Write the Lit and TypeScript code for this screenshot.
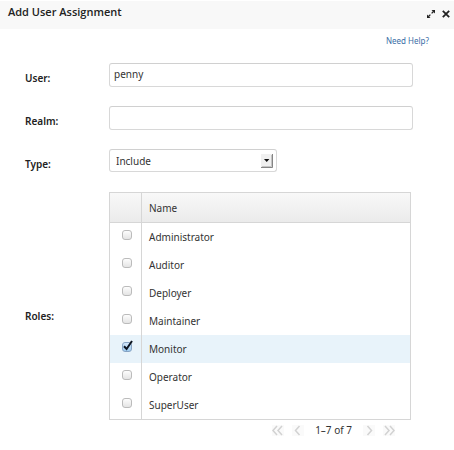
import { LitElement, html, css, svg } from "lit";
import { customElement, state } from "lit/decorators.js";

interface Role {
  name: string;
  granted: boolean;
}

const chevron = (double: boolean) => svg`
  <path d="${double ? "M5 1 L1 5.5 L5 10 M10 1 L6 5.5 L10 10" : "M7.5 1 L3.5 5.5 L7.5 10"}"
    fill="none" stroke="#d2d2d2" stroke-width="1.5"></path>`;

@customElement("app-root")
export class AppRoot extends LitElement {
  @state() private roles: Role[] = [
    { name: "Administrator", granted: false },
    { name: "Auditor", granted: false },
    { name: "Deployer", granted: false },
    { name: "Maintainer", granted: false },
    { name: "Monitor", granted: true },
    { name: "Operator", granted: false },
    { name: "SuperUser", granted: false },
  ];

  static styles = css`
    :host {
      display: block;
      min-height: 100vh;
      background: #fff;
      color: #333;
      font: 10px/16px "Noto Sans", "Open Sans", sans-serif;
    }
    * { box-sizing: border-box; }
    .bar {
      display: flex;
      align-items: center;
      height: 29px;
      padding: 0 4px 6px 8px;
      border-top: 1px solid #fff;
      background: #f8f8f8;
    }
    .title {
      flex: 1;
      margin: 0;
      font-family: "Open Sans", "Noto Sans", sans-serif;
      font-size: 11px;
      line-height: 16px;
      font-weight: 600;
      color: #222;
    }
    button {
      display: flex;
      padding: 0;
      border: 0;
      background: none;
      font: inherit;
    }
    .tools {
      display: flex;
      align-items: center;
      gap: 7px;
      padding-top: 4px;
    }
    .help {
      display: flex;
      justify-content: flex-end;
      height: 34px;
      padding: 4px 25px 0 0;
      font-size: 8px;
    }
    .help a {
      color: #3a6da6;
      text-decoration: none;
    }
    .form {
      display: flex;
      flex-direction: column;
      gap: 13px;
      padding: 0 41px 0 25px;
    }
    .row {
      display: grid;
      grid-template-columns: 84px 1fr;
      align-items: center;
      min-height: 30px;
    }
    .label {
      font-weight: 600;
      color: #222;
    }
    .control {
      align-self: start;
      min-width: 0;
    }
    .text, .pick {
      display: block;
      width: 100%;
      height: 24px;
      padding: 0 4px 2px;
      border: 1px solid #d8d8d8;
      border-top-color: #d0d0d0;
      border-radius: 3px;
      background: #fff;
      color: #333;
      font: inherit;
      outline: none;
    }
    .select {
      position: relative;
      width: 168px;
    }
    .pick {
      appearance: none;
      height: 23px;
      padding: 0 24px 0 6px;
    }
    .arrow {
      position: absolute;
      right: 4px;
      top: 5px;
      pointer-events: none;
    }
    .grid {
      width: calc(100% - 2px);
      border-collapse: separate;
      border-spacing: 0;
      border: 1px solid #d6d6d6;
    }
    th {
      height: 30px;
      padding: 0 7px;
      border-bottom: 1px solid #d6d6d6;
      background: linear-gradient(#f8f8f8, #ebebeb);
      font-weight: 400;
      text-align: left;
    }
    td {
      height: 28px;
      padding: 0 7px;
    }
    .tick {
      width: 32px;
      padding: 0;
      border-right: 1px solid #d6d6d6;
    }
    .chosen td { background: #e8f3fa; }
    .box {
      display: block;
      width: 10px;
      height: 10px;
      margin: 0 auto 4px 12px;
      appearance: none;
      border: 1px solid #bbb;
      border-radius: 3px;
      background: linear-gradient(#fdfdfd, #e4e4e4);
    }
    .box:checked {
      border-color: #86a3c4;
      background: linear-gradient(#d3e7fa, #9fccf0);
    }
    .cell {
      position: relative;
      display: block;
    }
    .check {
      position: absolute;
      left: 12px;
      top: -2px;
      pointer-events: none;
    }
    .pager {
      display: flex;
      justify-content: flex-end;
      align-items: center;
      gap: 8px;
      height: 20px;
      padding-right: 18px;
    }
    .count { padding: 0 3px; }
    .page { background: #fafafa; }
  `;

  private toggle(index: number, event: Event) {
    const granted = (event.target as HTMLInputElement).checked;
    this.roles = this.roles.map((r, i) => (i === index ? { ...r, granted } : r));
  }

  private pageButton(name: string, double: boolean, forward: boolean) {
    return html`<button class="page" type="button" aria-label=${name} disabled>
      <svg width="12" height="11" viewBox="0 0 12 11">
        <g transform=${forward ? "translate(12 0) scale(-1 1)" : "translate(0 0)"}>${chevron(double)}</g>
      </svg>
    </button>`;
  }

  render() {
    return html`
      <header class="bar">
        <h1 class="title">Add User Assignment</h1>
        <div class="tools">
          <button type="button" aria-label="Maximize">
            <svg width="8" height="8" viewBox="0 0 8 8" fill="#222" stroke="#222">
              <path d="M4.5 0 H8 V3.5 Z M0 4.5 V8 H3.5 Z" stroke="none"></path>
              <path d="M6.5 1.5 L4.6 3.4 M3.4 4.6 L1.5 6.5" stroke-width="1.3"></path>
            </svg>
          </button>
          <button type="button" aria-label="Close">
            <svg width="8" height="8" viewBox="0 0 8 8">
              <path d="M0.8 0.8 L7.2 7.2 M7.2 0.8 L0.8 7.2" stroke="#222" stroke-width="1.8"></path>
            </svg>
          </button>
        </div>
      </header>
      <div class="help"><a href="#help">Need Help?</a></div>
      <form class="form">
        <div class="row">
          <label class="label" for="user">User:</label>
          <div class="control"><input class="text" id="user" type="text" value="penny" /></div>
        </div>
        <div class="row">
          <label class="label" for="realm">Realm:</label>
          <div class="control"><input class="text" id="realm" type="text" /></div>
        </div>
        <div class="row">
          <label class="label" for="type">Type:</label>
          <div class="control select">
            <select class="pick" id="type">
              <option>Include</option>
              <option>Exclude</option>
            </select>
            <svg class="arrow" width="12" height="14" viewBox="0 0 12 14">
              <rect width="12" height="14" fill="#f0f0f0"></rect>
              <path d="M0 13.5 H11.5 V0" fill="none" stroke="#858585"></path>
              <path d="M1 12.5 H10.5 V1" fill="none" stroke="#c4c4c4"></path>
              <path d="M3 5 H8.4 L5.7 8 Z" fill="#111"></path>
            </svg>
          </div>
        </div>
        <div class="row">
          <span class="label" id="roles">Roles:</span>
          <div class="control">
            <table class="grid" aria-labelledby="roles">
              <thead>
                <tr><th class="tick"></th><th>Name</th></tr>
              </thead>
              <tbody>
                ${this.roles.map((role, i) => html`
                  <tr class=${role.granted ? "chosen" : ""}>
                    <td class="tick">
                      <span class="cell">
                        <input class="box" type="checkbox" id="role-${i}" .checked=${role.granted}
                          @change=${(e: Event) => this.toggle(i, e)} />
                        ${role.granted ? html`<svg class="check" width="12" height="12" viewBox="0 0 12 12">
                          <path d="M2 6.2 L4.6 9 L10 1" fill="none" stroke="#0c1420" stroke-width="2"></path>
                        </svg>` : ""}
                      </span>
                    </td>
                    <td><label for="role-${i}">${role.name}</label></td>
                  </tr>`)}
              </tbody>
            </table>
            <div class="pager">
              ${this.pageButton("First page", true, false)}
              ${this.pageButton("Previous page", false, false)}
              <span class="count">1–7 of 7</span>
              ${this.pageButton("Next page", false, true)}
              ${this.pageButton("Last page", true, true)}
            </div>
          </div>
        </div>
      </form>
    `;
  }
}
